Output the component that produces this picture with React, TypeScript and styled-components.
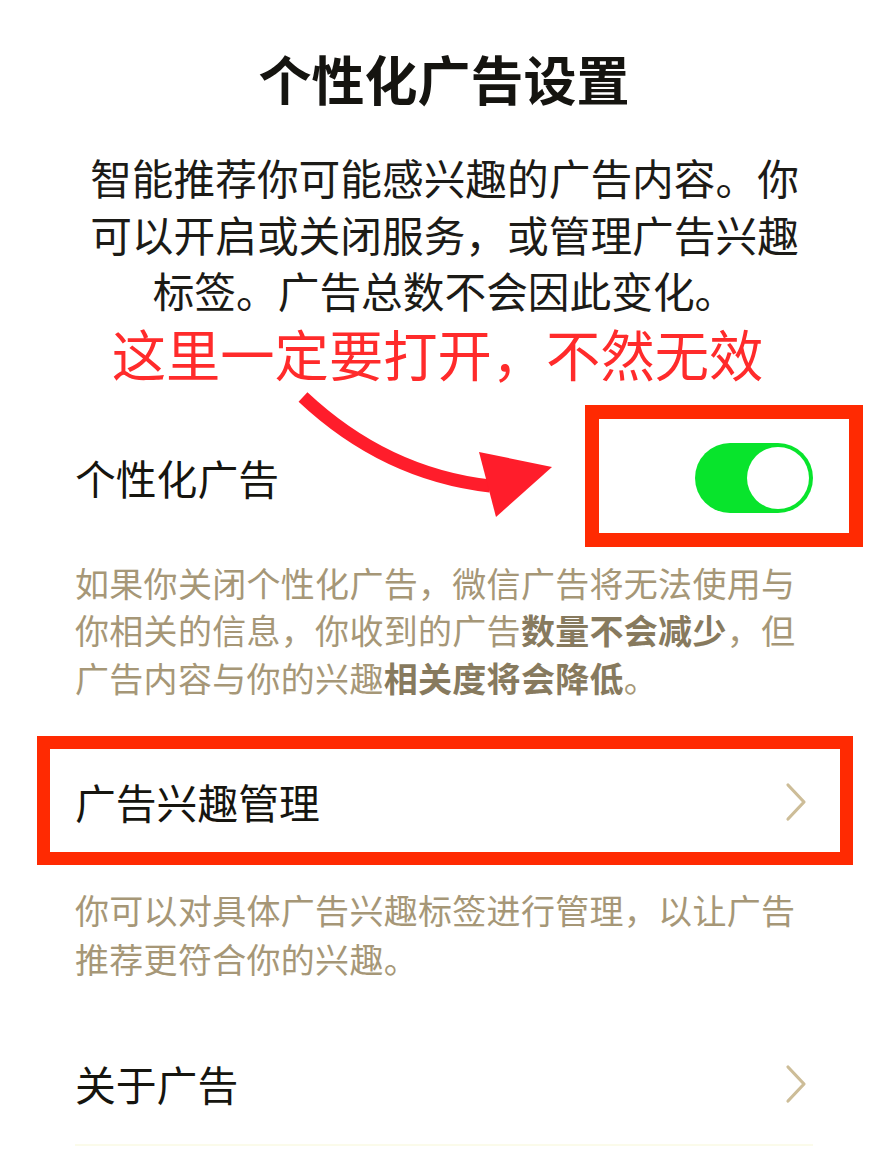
import React from 'react';
import styled, { createGlobalStyle } from 'styled-components';

const GlobalStyle = createGlobalStyle`
  html, body {
    margin: 0;
    padding: 0;
    background: #ffffff;
  }
  body {
    font-family: "Noto Sans CJK SC", "Noto Sans", sans-serif;
  }
`;

const Page = styled.div`
  position: relative;
  width: 887px;
  padding: 46px 74px 0 75px;
  box-sizing: border-box;
  background: #ffffff;
`;

const Title = styled.h1`
  margin: 0;
  font-size: 53px;
  line-height: 64px;
  font-weight: 700;
  color: #151410;
  text-align: center;
`;

const Intro = styled.p`
  margin: 39px -75px 0 -74px;
  font-size: 41.7px;
  line-height: 56.5px;
  color: #1c1b17;
  text-align: center;
  white-space: nowrap;
`;

const Warning = styled.p`
  margin: 2px -75px 0 -74px;
  padding-right: 14px;
  font-size: 54.3px;
  line-height: 64px;
  color: #ff2b2b;
  text-align: center;
  white-space: nowrap;
`;

const Row = styled.div<{ $gap: number; $height?: number; $line?: boolean }>`
  position: relative;
  display: flex;
  align-items: center;
  justify-content: space-between;
  margin-top: ${({ $gap }) => $gap}px;
  height: ${({ $height }) => $height ?? 120}px;
  border-bottom: ${({ $line }) => ($line ? '2px solid #fbfbea' : 'none')};
  box-sizing: border-box;
`;

const Label = styled.span`
  font-size: 40.8px;
  line-height: 56px;
  color: #16150f;
`;

const Note = styled.div<{ $gap: number; $lh: number }>`
  margin: ${({ $gap }) => $gap}px 0 0;
  font-size: 34px;
  letter-spacing: 0.3px;
  line-height: ${({ $lh }) => $lh}px;
  color: #a69777;
  white-space: nowrap;

  b {
    font-weight: 700;
    color: #877a5e;
  }
`;

const NoteLine = styled.div`
  display: block;
`;

// red marker frames drawn over a row
const Frame = styled.div<{ $top: number; $left: number; $right: number; $height: number; $border: number }>`
  position: absolute;
  top: ${({ $top }) => $top}px;
  left: ${({ $left }) => $left - 75}px;
  right: ${({ $right }) => $right - 74}px;
  height: ${({ $height }) => $height}px;
  border: ${({ $border }) => $border}px solid #ff2a02;
  box-sizing: border-box;
  pointer-events: none;
`;

const Toggle = styled.div<{ $on: boolean }>`
  position: relative;
  width: 118px;
  height: 70px;
  border-radius: 35px;
  background: ${({ $on }) => ($on ? '#08e42c' : '#e5e5e5')};
`;

const Knob = styled.div<{ $on: boolean }>`
  position: absolute;
  top: 4px;
  ${({ $on }) => ($on ? 'right: 4px;' : 'left: 4px;')}
  width: 62px;
  height: 62px;
  border-radius: 50%;
  background: #ffffff;
`;

const ArrowMark = styled.svg`
  position: absolute;
  left: 215px;
  top: -30px;
  width: 275px;
  height: 150px;
  overflow: visible;
  pointer-events: none;
`;

const Chevron = styled.svg`
  width: 22px;
  height: 40px;
  margin-right: 6px;
`;

const ChevronIcon = () => (
  <Chevron viewBox="0 0 22 40">
    <polyline
      points="3,3 19,20 3,37"
      fill="none"
      stroke="#cdbd98"
      strokeWidth="3.2"
      strokeLinecap="round"
      strokeLinejoin="round"
    />
  </Chevron>
);

const App = () => {
  return (
    <>
      <GlobalStyle />
      <Page>
        <Title>个性化广告设置</Title>
        <Intro>
          智能推荐你可能感兴趣的广告内容。你
          <br />
          可以开启或关闭服务，或管理广告兴趣
          <br />
          标签。广告总数不会因此变化。
        </Intro>
        <Warning>这里一定要打开，不然无效</Warning>

        <Row $gap={33}>
          <Label>个性化广告</Label>
          <ArrowMark viewBox="0 0 275 150">
            <path
              d="M13 9 Q95 86 200 98"
              fill="none"
              stroke="#ff1d2b"
              strokeWidth="13"
            />
            <polygon points="189,64 262,79 206,129" fill="#ff1d2b" />
          </ArrowMark>
          <Frame $top={-13} $left={585} $right={24} $height={142} $border={14} />
          <Toggle $on>
            <Knob $on />
          </Toggle>
        </Row>

        <Note $gap={21} $lh={47.5}>
          <NoteLine>如果你关闭个性化广告，微信广告将无法使用与</NoteLine>
          <NoteLine>
            <span>你相关的信息，你收到的广告</span>
            <b>数量不会减少</b>
            <span>，但</span>
          </NoteLine>
          <NoteLine>
            <span>广告内容与你的兴趣</span>
            <b>相关度将会降低</b>
            <span>。</span>
          </NoteLine>
        </Note>

        <Row $gap={41}>
          <Label>广告兴趣管理</Label>
          <ChevronIcon />
          <Frame $top={-6} $left={37} $right={34} $height={129} $border={13} />
        </Row>

        <Note $gap={23} $lh={49}>
          <NoteLine>你可以对具体广告兴趣标签进行管理，以让广告</NoteLine>
          <NoteLine>推荐更符合你的兴趣。</NoteLine>
        </Note>

        <Row $gap={40} $height={123} $line>
          <Label>关于广告</Label>
          <ChevronIcon />
        </Row>
      </Page>
    </>
  );
};

export default App;
